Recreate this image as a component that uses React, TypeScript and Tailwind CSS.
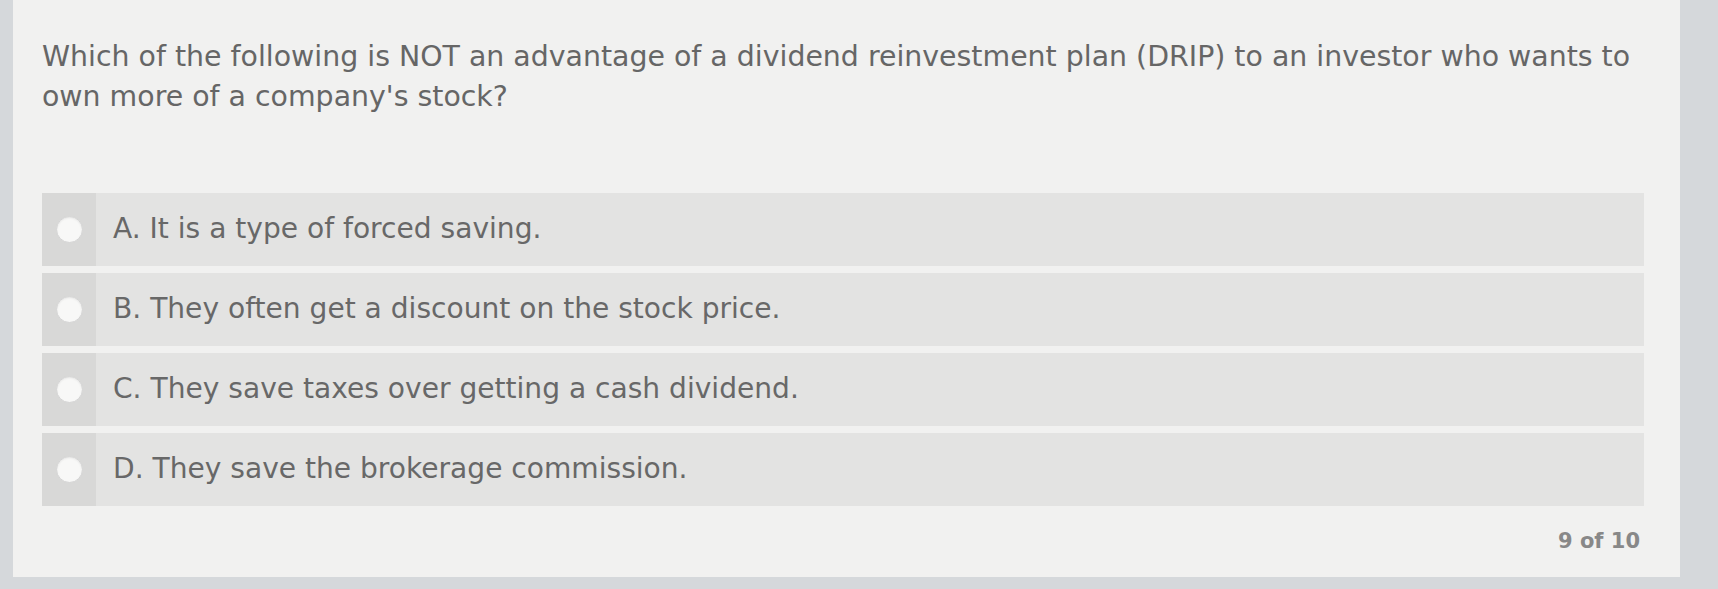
const options = [
  'A. It is a type of forced saving.',
  'B. They often get a discount on the stock price.',
  'C. They save taxes over getting a cash dividend.',
  'D. They save the brokerage commission.',
];

export default function App() {
  return (
    <div className="h-[589px] w-full overflow-hidden bg-[#d5d8db] font-['DejaVu_Sans','Verdana',sans-serif]">
      <div className="ml-[13px] h-[577px] w-[1667px] bg-[#f1f1f0] pl-[29px] pt-[37px]">
        {/* Question */}
        <p className="w-[1620px] text-[28.4px] leading-[40px] text-[#666666]">
          Which of the following is NOT an advantage of a dividend reinvestment plan (DRIP) to an investor who wants to
          own more of a company's stock?
        </p>

        {/* Choices */}
        <div className="mt-[76px] flex w-[1602px] flex-col gap-[7px]">
          {options.map((opt) => (
            <div key={opt} className="flex h-[73px] bg-[#e3e3e2]">
              <div className="flex w-[54px] shrink-0 items-center justify-center bg-[#d8d8d7]">
                <span className="h-[27px] w-[27px] rounded-full border border-[#d4d4d4] bg-[#f8f8f7] shadow-[inset_0_1px_2px_rgba(0,0,0,0.08)]" />
              </div>
              <div className="flex items-center pl-[17px] text-[28.1px] text-[#686868]">{opt}</div>
            </div>
          ))}
        </div>

        {/* Progress */}
        <div className="mt-[20px] flex w-[1602px] justify-end pr-[4px]">
          <span className="text-[21px] font-bold text-[#888888]">9 of 10</span>
        </div>
      </div>
    </div>
  );
}
